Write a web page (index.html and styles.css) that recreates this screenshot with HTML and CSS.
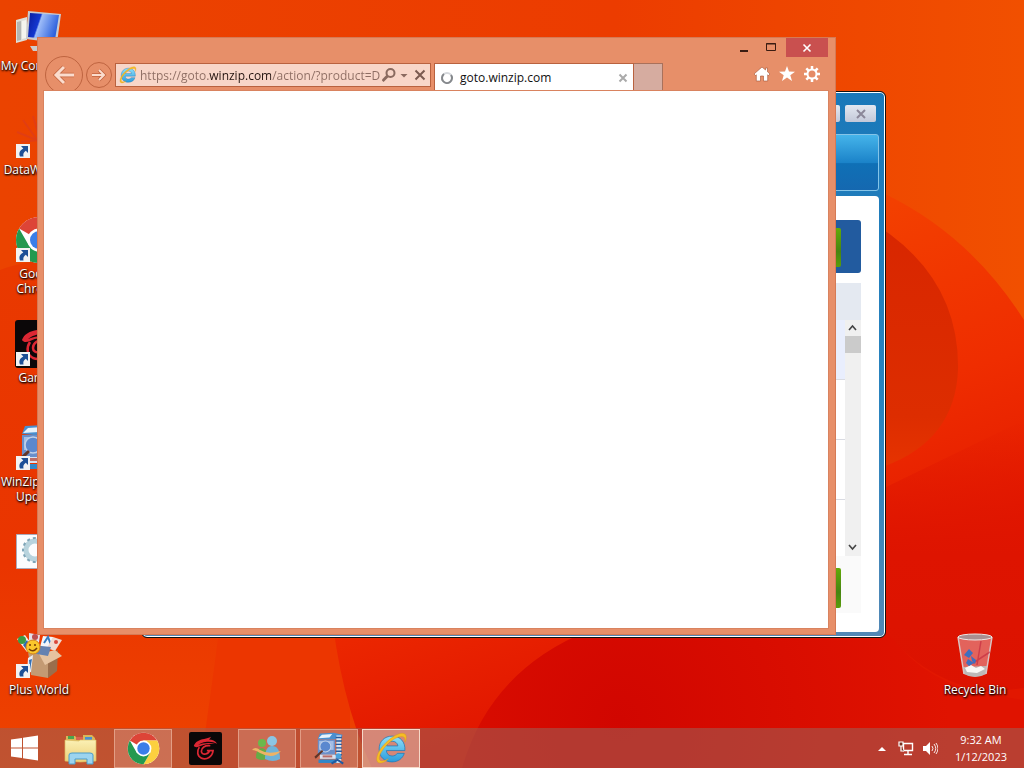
FILE: index.html
```html
<!DOCTYPE html>
<html lang="en">
<head>
  <meta charset="UTF-8" />
  <meta name="viewport" content="width=device-width, initial-scale=1.0" />
  <title>Desktop</title>
  <link rel="stylesheet" href="styles.css">
</head>
<body>
  <!-- shared icons -->
  <svg class="defs" width="0" height="0" aria-hidden="true">
    <defs>
      <linearGradient id="blueScreen" x1="0" y1="0" x2="1" y2=".3">
        <stop offset="0" stop-color="#0a1c9c"/><stop offset=".4" stop-color="#1338d0"/>
        <stop offset=".45" stop-color="#9dbcf8"/><stop offset="1" stop-color="#2f62dd"/>
      </linearGradient>
      <linearGradient id="ieBlue" x1="0" y1="0" x2="0" y2="1">
        <stop offset="0" stop-color="#8fe0fa"/><stop offset="1" stop-color="#2a9cdc"/>
      </linearGradient>
      <linearGradient id="folder" x1="0" y1="0" x2="0" y2="1">
        <stop offset="0" stop-color="#fbf0b4"/><stop offset="1" stop-color="#ecd078"/>
      </linearGradient>
      <symbol id="shortcut" viewBox="0 0 14 14">
        <path d="M0 0h14v14H0z" fill="#f2f2f2"/>
        <path d="M5 2h7v7L9.800 6.800C7.500 8.500 7 10 7.500 12.500H4C2.500 9 4 6 7.300 4.500z" fill="#1d4f96"/>
      </symbol>
      <symbol id="chrome" viewBox="0 0 48 48">
        <circle cx="24" cy="24" r="23" fill="#fff"/>
        <path d="M24 24 4.100 12.500A23 23 0 0 1 43.900 12.500H24z" fill="#dd4437"/>
        <path d="M43.900 12.500A23 23 0 0 1 24 47L34 29.700 24 12.500z" fill="#fcd03f"/>
        <path d="M4.100 12.500A23 23 0 0 0 24 47L34 29.700 24 35 14 29.700z" fill="#24994f"/>
        <circle cx="24" cy="24" r="11.500" fill="#fff"/>
        <circle cx="24" cy="24" r="9" fill="#3b7ee8"/>
      </symbol>
      <symbol id="garena" viewBox="0 0 48 48">
        <rect width="48" height="48" rx="3" fill="#0b0708"/>
        <path d="M7 20c2-6 8-9 15-10 4-1 7-1 10-3-1 2-2 3-3 4 5 0 9 2 12 6-4-2-8-3-12-3-8 0-12 2-16 5 7-3 15-4 25-2-9 0-17 1-23 4-3 1-6 2-8-1z" fill="#dc2733"/>
        <path d="M15 22c-4 6-3 13 3 16 8 3 16-2 17-11h-9M31 20c-8-1-13 3-13 8 0 3 3 5 6 4 3 0 5-2 6-5" fill="none" stroke="#dc2733" stroke-width="2.500"/>
      </symbol>
      <symbol id="winzip" viewBox="0 0 48 48">
        <path d="M10 2 30 1l13 3-2 6-22 1-12-1z" fill="#4a8fd0"/>
        <path d="m13 4 15-1-4 5-16 1z" fill="#e8f2fb"/>
        <path d="M7 11h25v22H7z" fill="#6a8fca"/>
        <path d="M9 13h21v13H9z" fill="#a3bde6"/>
        <circle cx="18" cy="21" r="8" fill="#5b88cf" stroke="#c0d0e8" stroke-width="1.500"/>
        <path d="M2 36 13 26l2 2L4 39z" fill="#613528"/>
        <path d="M10 33h24v6H10z" fill="#d6e2f2"/><path d="M14 34h14v3H14z" fill="#bc6d68"/>
        <path d="M8 40h28v5H8z" fill="#3187c9"/>
        <path d="M34 5h7v40h-7z" fill="#d3e3f2"/>
        <path d="M33 8h9m-9 5h9m-9 5h9m-9 5h9m-9 5h9m-9 5h9m-9 5h9" stroke="#29589a" stroke-width="2"/>
        <circle cx="37" cy="35" r="4" fill="#4ba2dc"/><path d="m35 40 9 6M36 40l-9 6" stroke="#225a9f" stroke-width="3"/>
      </symbol>
      <symbol id="ie" viewBox="0 0 32 32">
        <path d="M29 18H11c.3 3.400 2.500 5.300 5.600 5.300 2.400 0 4-1 5-2.600h6.800C26.800 25.700 22.500 29 16.500 29 9 29 4 24 4 16.500S9.300 4 16.700 4C24.500 4 29.500 9.400 29 18zM11.200 13.500h11c-.5-3-2.600-4.500-5.500-4.500s-5 1.700-5.500 4.500z" fill="url(#ieBlue)" stroke="#1978b9" stroke-width=".7"/>
        <path d="M6 30C-1 31 1 21 8 13 15 5 25-1 29 2c2 1.500 1.500 5 0 8 0-3 .3-5-2-5.500C22 3.500 14 9 8.500 16 4 22 2.500 27 6 28c2 .5 5-1 7-2-2 2-4.500 3.700-7 4z" fill="#f6bd25" stroke="#d89817" stroke-width=".4"/>
      </symbol>
    </defs>
  </svg>

  <main class="desktop">
    <svg class="wallpaper" viewBox="0 0 1024 768" preserveAspectRatio="none" aria-hidden="true">
      <defs>
        <linearGradient id="sky" x1="0" y1="0" x2="1" y2="0">
          <stop offset="0" stop-color="#eb4300"/><stop offset=".6" stop-color="#ec3c00"/><stop offset="1" stop-color="#f15000"/>
        </linearGradient>
        <linearGradient id="leftPetal" x1="0" y1="0" x2="0" y2="1">
          <stop offset="0" stop-color="#e93900"/><stop offset=".6" stop-color="#ea3500"/><stop offset="1" stop-color="#ee4300"/>
        </linearGradient>
        <linearGradient id="rightPetal" x1="860" y1="210" x2="980" y2="560" gradientUnits="userSpaceOnUse">
          <stop offset="0" stop-color="#f34000"/><stop offset=".5" stop-color="#ef2d00"/>
          <stop offset="1" stop-color="#e21700"/>
        </linearGradient>
        <linearGradient id="leaf" x1="0" y1="0" x2="0" y2="1">
          <stop offset="0" stop-color="#d82600"/><stop offset=".8" stop-color="#dd2d00"/><stop offset="1" stop-color="#e63300"/>
        </linearGradient>
        <radialGradient id="core" cx="620" cy="720" r="330" gradientUnits="userSpaceOnUse">
          <stop offset="0" stop-color="#d10600"/><stop offset="1" stop-color="#e01300"/>
        </radialGradient>
        <linearGradient id="fan" x1="0" y1="0" x2="0" y2="1">
          <stop offset="0" stop-color="#df1400" stop-opacity="0"/><stop offset=".5" stop-color="#de1400"/><stop offset="1" stop-color="#dc1200"/>
        </linearGradient>
      </defs>
      <path d="M0 0h1024v768H0z" fill="url(#sky)"/>
      <path d="M0 270Q20 262 60 258L400 768H0z" fill="url(#leftPetal)"/>
      <path d="M200 768Q210 700 222 610H350V768z" fill="#ec3600"/>
      <path d="M330 600Q340 700 372 768H1024V320Q970 235 885 194L700 160V600z" fill="url(#rightPetal)"/>
      <path d="M462 768Q490 670 590 630H890Q910 672 975 692L1024 700V768z" fill="url(#core)"/>
      <path d="M875 615Q915 680 990 692L1024 688V420L880 490z" fill="url(#fan)"/>
      <path d="M860 215Q960 270 958 370Q955 440 885 466H820z" fill="url(#leaf)"/>
    </svg>

    <section class="shortcuts" aria-label="Desktop icons">
      <a class="shortcut" href="#">
        <svg class="shortcut-icon" viewBox="0 0 48 48">
          <path d="m1 12 11-3v23L1 35z" fill="#dedfd8"/><path d="m2 14 4-1v19l-4 1z" fill="#b4b6b2"/><path d="m7 13 4-1v18l-4 1z" fill="#f5f5ee"/>
          <path d="M13 3 46 6l-4 29-31-4z" fill="#c8cbd0"/><path d="m15 5 29 2-4 25-27-3z" fill="url(#blueScreen)"/>
          <path d="M15 38h22l3 5H18z" fill="#ccc"/>
        </svg>
        <span class="shortcut-label">My Computer</span>
      </a>
      <a class="shortcut" href="#">
        <svg class="shortcut-icon" viewBox="0 0 48 48">
          <path d="M8 8 22 28M2 20l22 9M18 4l6 20M6 30l18-2" stroke="#c7324a" stroke-width="2" opacity=".25"/>
          <use href="#shortcut" y="32" x="1" width="14" height="14"/>
        </svg>
        <span class="shortcut-label">DataWizards</span>
      </a>
      <a class="shortcut" href="#">
        <svg class="shortcut-icon" viewBox="0 0 48 48">
          <use href="#chrome" width="48" height="48"/>
          <use href="#shortcut" y="32" x="1" width="14" height="14"/>
        </svg>
        <span class="shortcut-label">Google<br>Chrome</span>
      </a>
      <a class="shortcut" href="#">
        <svg class="shortcut-icon" viewBox="0 0 48 48">
          <use href="#garena" width="48" height="48"/>
          <use href="#shortcut" y="32" x="1" width="14" height="14"/>
        </svg>
        <span class="shortcut-label">Garena</span>
      </a>
      <a class="shortcut" href="#">
        <svg class="shortcut-icon" viewBox="0 0 48 48">
          <use href="#winzip" width="48" height="48"/>
          <use href="#shortcut" y="32" x="1" width="14" height="14"/>
        </svg>
        <span class="shortcut-label">WinZip Driver<br>Updater</span>
      </a>
      <a class="shortcut" href="#" aria-label="Settings file">
        <svg class="shortcut-icon" viewBox="0 0 48 48">
          <path d="M1.500 6.500h44v34h-44z" fill="#fbfcfd" stroke="#aab"/>
          <circle cx="20" cy="22" r="9" fill="none" stroke="#b8d3dd" stroke-width="5"/>
          <circle cx="20" cy="22" r="12" fill="none" stroke="#7fa5b7" stroke-width="2" stroke-dasharray="3 3"/>
        </svg>
      </a>
      <a class="shortcut" href="#">
        <svg class="shortcut-icon" viewBox="0 0 48 48">
          <path d="m2 7 8-4 10 14-8 3z" fill="#f4f0e8"/><circle cx="7" cy="8" r="4" fill="#3d9a44"/><path d="m8 13 4-5 3 6-4 3z" fill="#2969b5"/>
          <path d="m14 1 11 2-2 15-9-2z" fill="#e4dfe9"/><circle cx="20" cy="5" r="3" fill="#bd4e51"/>
          <path d="m28 4 10 1-1 12-12-2z" fill="#f3f6fb"/><path d="m29 11 4-6 3 8" fill="none" stroke="#347bc2" stroke-width="2"/>
          <path d="m38 5 9 3-7 11-8-3z" fill="#f2d8cf"/><circle cx="41" cy="10" r="2" fill="#da463b"/>
          <path d="m13 19 20 4v23l-17-3z" fill="#c39a73"/><path d="m33 23 10-5-1 21-9 7z" fill="#9a6e4c"/>
          <path d="m24 22 16-4 7 6-17 9z" fill="#e6c3a0"/><path d="m17 13 19 2-3 9-17-3z" fill="#6582b1"/>
          <circle cx="18" cy="15" r="7" fill="#fbc72c" stroke="#d6861a"/><path d="M15 12v2m5-2v2m-6 3q4 4 8-1" fill="none" stroke="#733a06" stroke-width="1.500"/>
          <path d="m13 26 5-3-2 17-4 1z" fill="#e9eef6"/><path d="m14 28 3-1-2 11z" fill="#3470b4"/>
          <use href="#shortcut" y="32" x="1" width="14" height="14"/>
        </svg>
        <span class="shortcut-label">Plus World</span>
      </a>
    </section>

    <section class="shortcuts shortcuts-right" aria-label="Recycle Bin">
      <a class="shortcut" href="#">
        <svg class="shortcut-icon" viewBox="0 0 48 48">
          <path d="M7 5h34l-6 37q-11 6-22 0z" fill="#e8a5a8" opacity=".55"/>
          <path d="m12 35 24-1-1 8q-11 6-22 0z" fill="#bdb9b8"/><path d="m14 36 6-3 5 3 5-2 4 3-8 4-10-1z" fill="#f8f7f4"/>
          <path d="M7 5 13 42M41 5l-6 37" stroke="#d9c5c4" stroke-width="1.500"/>
          <path d="m30 9-4 24M39 20 22 31" stroke="#c1273e" stroke-width="1.500" opacity=".6"/>
          <path d="m13 23 5-6 4 4-4 5zM17 27l6 4-5 3-3-3zM20 24l5 4-1 4-3-3z" fill="#3e6fc0"/>
          <ellipse cx="24" cy="5" rx="17" ry="3" fill="#a98f91" stroke="#efe7e5"/>
        </svg>
        <span class="shortcut-label">Recycle Bin</span>
      </a>
    </section>

    <section class="window updater" aria-label="Driver Updater">
      <div class="updater-caption">
        <button class="updater-button" aria-label="Minimize driver updater"></button>
        <button class="updater-button" aria-label="Close driver updater">
          <svg width="12" height="10" viewBox="0 0 12 10"><path d="m2 1 8 8m0-8L2 9" stroke="#8b8799" stroke-width="2"/></svg>
        </button>
      </div>
      <div class="updater-banner"></div>
      <div class="updater-body">
        <div class="updater-status"><span class="updater-green"></span></div>
        <div class="updater-list">
          <div class="updater-list-head"></div>
          <div class="updater-list-main">
            <div class="updater-rows">
              <div class="updater-row selected"></div>
              <div class="updater-row"></div>
              <div class="updater-row"></div>
            </div>
            <div class="scrollbar">
              <svg width="15" height="16" viewBox="0 0 15 16"><path d="m4 10 3.500-4 3.500 4" fill="none" stroke="#444" stroke-width="1.600"/></svg>
              <div class="scroll-thumb"></div>
              <svg class="scroll-down" width="15" height="16" viewBox="0 0 15 16"><path d="m4 5 3.500 4L11 5" fill="none" stroke="#444" stroke-width="1.600"/></svg>
            </div>
          </div>
        </div>
        <div class="updater-footer"><span class="updater-green"></span></div>
      </div>
    </section>

    <section class="window browser" aria-label="Internet Explorer">
      <div class="caption">
        <button class="caption-button" aria-label="Minimize"><svg width="12" height="12" viewBox="0 0 12 12"><path d="M2 9h8" stroke="#3b1c12" stroke-width="2"/></svg></button>
        <button class="caption-button" aria-label="Maximize"><svg width="12" height="12" viewBox="0 0 12 12"><path d="M1.500 1.500h9v7h-9zM1 2h10" fill="none" stroke="#3b1c12"/></svg></button>
        <button class="caption-button close" aria-label="Close"><svg width="12" height="12" viewBox="0 0 12 12"><path d="m2.500 2.500 7 7m0-7-7 7" stroke="#fff" stroke-width="1.600"/></svg></button>
      </div>
      <div class="toolbar">
        <button class="nav-button back" aria-label="Back"><svg width="24" height="24" viewBox="0 0 24 24"><path d="M22 12H4m8-8-8 8 8 8" fill="none" stroke="#c2643f" stroke-width="4.500"/><path d="M22 12H4m8-8-8 8 8 8" fill="none" stroke="#fbdccd" stroke-width="3"/></svg></button>
        <button class="nav-button" aria-label="Forward"><svg width="16" height="16" viewBox="0 0 16 16"><path d="M1 8h12M8 3l5 5-5 5" fill="none" stroke="#c2643f" stroke-width="3.500"/><path d="M1 8h12M8 3l5 5-5 5" fill="none" stroke="#fbdccd" stroke-width="2"/></svg></button>
        <form class="address">
          <svg width="18" height="18" viewBox="0 0 32 32"><use href="#ie"/></svg>
          <input class="address-input" type="text" aria-label="Address" value="https://goto.winzip.com/action/?product=D">
          <button class="address-button search" type="button" aria-label="Search"><svg width="14" height="16" viewBox="1 0 14 16"><circle cx="9.500" cy="6" r="4" fill="none" stroke="#8a6a5f" stroke-width="2"/><path d="m6.500 9-5 5" stroke="#8a6a5f" stroke-width="3"/></svg></button>
          <button class="address-button" type="button" aria-label="Show history"><svg width="8" height="16" viewBox="0 0 8 16"><path d="M.5 7h7L4 10.500z" fill="#8a6a5f"/></svg></button>
          <button class="address-button stop" type="button" aria-label="Stop"><svg width="12" height="16" viewBox="0 0 12 16"><path d="m1.500 3.500 9 9m0-9-9 9" stroke="#7b5a50" stroke-width="2"/></svg></button>
        </form>
        <div class="tabs">
          <div class="tab">
            <svg width="14" height="14" viewBox="0 0 14 14"><circle cx="7" cy="7" r="5" fill="none" stroke="#d5d8dc" stroke-width="2"/><path d="M4 3a5 5 0 1 0 7 1" fill="none" stroke="#85888c" stroke-width="2"/></svg>
            <span class="tab-title">goto.winzip.com</span>
            <button class="tab-close" aria-label="Close tab"><svg width="10" height="10" viewBox="0 0 10 10"><path d="m1.500 1.500 7 7m0-7-7 7" stroke="#aaa" stroke-width="2"/></svg></button>
          </div>
          <button class="new-tab" aria-label="New tab"></button>
        </div>
        <div class="tools">
          <button class="tool" aria-label="Home"><svg width="16" height="16" viewBox="0 0 16 16"><path d="m8 1-8 7 1.500 1.500.8-.7V15H6.500v-5h3v5h4.200V8.800l.8.700L16 8l-2.500-2.200V2h-2v2z" fill="#fff" stroke="#a45232" stroke-width=".6"/></svg></button>
          <button class="tool" aria-label="Favorites"><svg width="16" height="16" viewBox="0 0 16 16"><path d="m8 0 2 5.500 6 .2-4.700 3.600L13 15l-5-3.400L3 15l1.700-5.700L0 5.700l6-.2z" fill="#fff"/></svg></button>
          <button class="tool" aria-label="Tools"><svg width="16" height="16" viewBox="0 0 16 16"><path d="M8 0v16M0 8h16M2.300 2.300l11.400 11.400m0-11.400L2.300 13.700" stroke="#fff" stroke-width="2.500"/><circle cx="8" cy="8" r="4.500" fill="#e58b66" stroke="#fff" stroke-width="2"/></svg></button>
        </div>
      </div>
      <div class="page"></div>
    </section>
  </main>

  <footer class="taskbar">
    <button class="start" aria-label="Start"><svg width="28" height="28" viewBox="0 0 28 28"><path d="M1 5.500 12 4v9.500H1zM13 3.800 28 1.500v12H13zM1 14.500h11V24L1 22.500zM13 14.500h15v12l-15-2.300z" fill="#fff"/></svg></button>
    <nav class="tasks" aria-label="Taskbar">
      <button class="task" aria-label="File Explorer">
        <svg width="34" height="34" viewBox="0 0 34 34">
          <path d="M2 7V4h9l2 2h6V3h9l3 3v20H2z" fill="#d8b65a"/><path d="M4 4h6v3H4z" fill="#4ca44f"/><path d="M12 5h7v3h-7z" fill="#d9604c"/><path d="M21 5h7v3h-7z" fill="#4a90cf"/>
          <path d="m1 8 14 1 1-1h16v21q-16 2-31 0z" fill="url(#folder)" stroke="#dcbc62" stroke-width=".7"/>
          <path d="M5 32v-9q0-2 3-2h18q3 0 3 2v9h-6v-5H11v5z" fill="#9cd4ef" stroke="#4a9dcb"/>
        </svg>
      </button>
      <button class="task open" aria-label="Google Chrome"><svg width="33" height="33"><use href="#chrome"/></svg></button>
      <button class="task" aria-label="Garena"><svg width="33" height="33"><use href="#garena"/></svg></button>
      <button class="task open" aria-label="Messenger">
        <svg width="34" height="34" viewBox="0 0 34 34">
          <circle cx="12" cy="11" r="4" fill="#6bb84b"/><path d="M6 26q0-10 6-10 5 0 6 10-6 4-12 0z" fill="#65ac46"/>
          <circle cx="22" cy="9" r="5" fill="#8bc5e3"/><path d="M15 27q0-13 7-13 8 0 8 13-7 4-15 0z" fill="#6fb2d7"/>
          <path d="M2 18q3-4 8 0 8 5 21 1-8 9-21 2-4-3-8-3z" fill="#eeb365"/>
        </svg>
      </button>
      <button class="task open" aria-label="WinZip Driver Updater"><svg width="33" height="33"><use href="#winzip"/></svg></button>
      <button class="task open active" aria-label="Internet Explorer"><svg width="33" height="33"><use href="#ie"/></svg></button>
    </nav>
    <div class="tray">
      <button class="tray-button" aria-label="Show hidden icons"><svg width="8" height="16" viewBox="0 0 8 16"><path d="m0 11 4-4 4 4z" fill="#fff"/></svg></button>
      <button class="tray-button" aria-label="Network"><svg width="16" height="16" viewBox="0 0 16 16"><path d="M5.500 3.500h9v7h-9zM10 11v3M6 14.500h8" fill="none" stroke="#fff" stroke-width="1.400"/><path d="M1 2h4v4H1zM3 6v5h3" fill="#7a3020" stroke="#fff" stroke-width="1.200"/></svg></button>
      <button class="tray-button" aria-label="Volume"><svg width="16" height="16" viewBox="0 0 16 16"><path d="M1 6h3l4-4v13l-4-4H1z" fill="#fff"/><path d="M10 6q2 2.500 0 5m2-7q3.500 4.500 0 9m2-10q4 5.500 0 11" fill="none" stroke="#fff" stroke-width=".9"/></svg></button>
      <div class="clock"><time>9:32 AM</time><time>1/12/2023</time></div>
    </div>
  </footer>
</body>
</html>
```

FILE: styles.css
```css
:root {
  --frame: #e78f69;
  --frame-line: #b9623f;
}

* {
  box-sizing: border-box;
}

body {
  margin: 0;
  height: 100vh;
  display: flex;
  flex-direction: column;
  overflow: hidden;
  background: #e83a00;
  font-family: "Open Sans", "Noto Sans", sans-serif;
  font-size: 12px;
}

button {
  display: flex;
  align-items: center;
  justify-content: center;
  padding: 0;
  border: 0;
  background: none;
  font: inherit;
}

svg {
  display: block;
  flex: none;
}

.defs {
  position: absolute;
}

.desktop {
  flex: 1;
  min-height: 0;
  display: flex;
  justify-content: space-between;
}

.wallpaper {
  position: absolute;
  inset: 0;
  width: 100%;
  height: 100%;
  z-index: -1;
}

/* desktop icons */
.shortcuts {
  display: flex;
  flex-direction: column;
}

.shortcuts-right {
  justify-content: flex-end;
  padding-right: 10px;
}

.shortcut {
  width: 78px;
  height: 104px;
  padding-top: 8px;
  display: flex;
  flex-direction: column;
  align-items: center;
  gap: 2px;
  color: #fff;
  text-decoration: none;
}

.shortcut-icon {
  width: 48px;
  height: 48px;
}

.shortcut-label {
  line-height: 15px;
  text-align: center;
  white-space: nowrap;
  text-shadow: 1px 1px 2px #000, 0 1px 2px #000;
}

.window {
  position: absolute;
  display: flex;
  flex-direction: column;
}

/* driver updater */
.updater {
  left: 141px;
  top: 91px;
  width: 745px;
  height: 547px;
  padding: 0 6px 5px 5px;
  border: 1px solid #111;
  border-radius: 6px;
  box-shadow: inset 0 0 0 1px #fff;
  background: linear-gradient(#1a78b9, #2a84bf 60%, #5288b6);
}

.updater-caption {
  height: 42px;
  display: flex;
  justify-content: flex-end;
  gap: 5px;
  padding: 13px 3px 0;
}

.updater-button {
  width: 31px;
  height: 17px;
  border-radius: 2px;
  background: linear-gradient(#e3e8f1, #c3c8d8);
}

.updater-banner {
  height: 57px;
  margin-bottom: 5px;
  border: 1px solid #84c4e8;
  border-radius: 3px;
  background: linear-gradient(#45b4ea, #1b83c9 50%, #0f70b6 52%, #1568b0);
}

.updater-body {
  flex: 1;
  display: flex;
  flex-direction: column;
  padding: 24px 18px 19px;
  border-radius: 4px;
  background: #fff;
}

.updater-status {
  height: 53px;
  display: flex;
  justify-content: flex-end;
  padding: 8px 20px 6px;
  border-radius: 3px;
  background: #225b9f;
}

.updater-green {
  width: 120px;
  border-radius: 2px;
  background: linear-gradient(#63aa09, #478412 60%, #5a9d0b);
}

.updater-list {
  flex: 1;
  display: flex;
  flex-direction: column;
  margin-top: 10px;
}

.updater-list-head {
  height: 37px;
  background: #e4e9f1;
}

.updater-list-main {
  flex: 1;
  display: flex;
}

.updater-rows {
  flex: 1;
}

.updater-row {
  height: 60px;
  border-bottom: 1px solid #d9dbe2;
}

.updater-row.selected {
  background: #e9eefd;
}

.scrollbar {
  width: 16px;
  display: flex;
  flex-direction: column;
  background: #f0f0f0;
}

.scroll-thumb {
  height: 17px;
  background: #cbcbcb;
}

.scroll-down {
  margin-top: auto;
}

.updater-footer {
  height: 57px;
  display: flex;
  justify-content: flex-end;
  padding: 12px 20px 5px;
  background: #fafafa;
}

/* browser window */
.browser {
  left: 37px;
  top: 37px;
  width: 799px;
  height: 598px;
  padding: 0 7px 6px 6px;
  border: 1px solid #d67a55;
  background: var(--frame);
}

.caption {
  height: 19px;
  display: flex;
  justify-content: flex-end;
}

.caption-button {
  width: 27px;
}

.caption-button.close {
  width: 42px;
  margin-left: 2px;
  background: #c9504f;
}

.toolbar {
  height: 34px;
  display: flex;
  align-items: flex-end;
}

.nav-button {
  flex: none;
  width: 26px;
  height: 26px;
  margin-bottom: 3px;
  border: 1px solid #bf6440;
  border-radius: 50%;
}

.nav-button.back {
  width: 38px;
  height: 38px;
  margin: 0 3px -3px 1px;
}

.address {
  flex: 0 1 316px;
  height: 24px;
  display: flex;
  align-items: center;
  margin: 0 3px 4px;
  padding: 0 4px 0 3px;
  border: 1px solid var(--frame-line);
  background: #f8d6c8;
}

.address-input {
  flex: 1;
  min-width: 0;
  height: 20px;
  margin-left: 3px;
  padding: 0;
  border: 0;
  outline: 0;
  font: inherit;
  color: transparent;
  /* the host name is darker than the rest of the address */
  background: linear-gradient(90deg, #8d6d62 69px, #24140f 69px 131px, #8d6d62 131px);
  -webkit-background-clip: text;
  background-clip: text;
}

.address-button {
  margin-left: 4px;
}

.address-button.search {
  margin-left: 0;
}

.address-button.stop {
  margin-left: 6px;
}

.tabs {
  flex: none;
  height: 28px;
  display: flex;
}

.tab {
  width: 200px;
  display: flex;
  align-items: center;
  padding: 0 5px;
  border: 1px solid var(--frame-line);
  border-bottom: 0;
  background: #fff;
}

.tab-title {
  flex: 1;
  margin-left: 6px;
  color: #111;
}

.new-tab {
  width: 29px;
  border: 1px solid #a9715b;
  border-width: 1px 1px 0 0;
  background: #d6aca0;
}

.tools {
  flex: 1;
  display: flex;
  justify-content: flex-end;
  gap: 9px;
  padding: 0 8px 9px 0;
}

.page {
  position: relative;
  flex: 1;
  background: #fff;
  outline: 1px solid #d9835f;
}

/* taskbar */
.taskbar {
  position: relative;
  height: 40px;
  display: flex;
  color: #fff;
  background: rgba(156, 95, 84, 0.57);
}

.start {
  width: 48px;
}

.tasks {
  display: flex;
  gap: 4px;
  margin-left: 4px;
  padding-top: 1px;
}

.task {
  width: 58px;
}

.task.open {
  border: 1px solid rgba(255, 215, 195, 0.45);
  background: rgba(225, 165, 150, 0.35);
}

.task.active {
  border-color: #f6d8c8;
  background: rgba(240, 205, 190, 0.5);
}

.tray {
  display: flex;
  align-items: center;
  gap: 8px;
  margin-left: auto;
  padding-right: 17px;
}

.tray-button:first-child {
  margin-right: 4px;
}

.clock {
  display: flex;
  flex-direction: column;
  align-items: center;
  margin-left: 9px;
  font-size: 11px;
  line-height: 17px;
}
```
